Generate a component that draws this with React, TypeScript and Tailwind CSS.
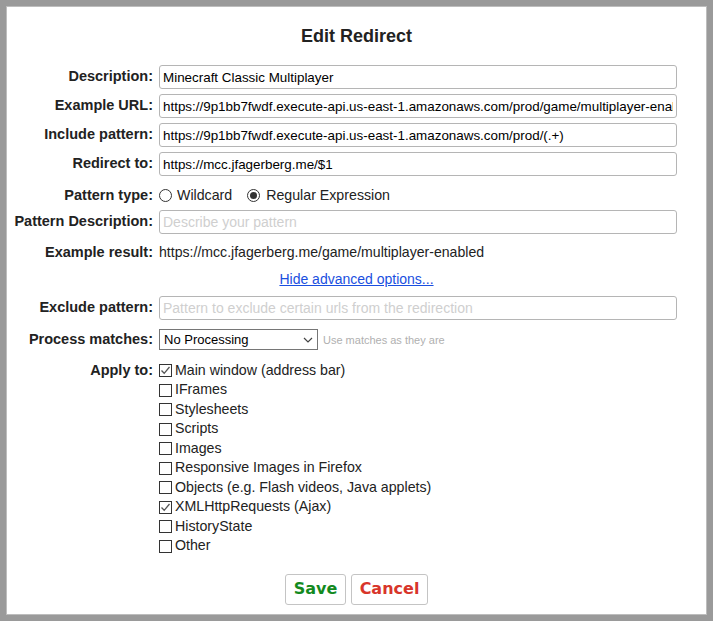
import React from 'react';

const labelCls = "w-[146px] shrink-0 text-right font-bold text-[14.5px] text-[#222]";
const inputCls = "w-[518px] h-[24px] border border-[#b5b5b5] rounded-[3px] px-[3px] text-[13.4px] text-black placeholder:text-[14px] placeholder:text-[#cfcfcf] outline-none bg-white";

const Row: React.FC<{ label: string; className?: string; children: React.ReactNode }> = ({ label, className, children }) => (
  <div className={`flex items-center gap-[6px] ${className || ''}`}>
    <div className={labelCls}>{label}</div>
    {children}
  </div>
);

const Radio: React.FC<{ checked?: boolean }> = ({ checked }) => (
  <span className="w-[13px] h-[13px] rounded-full border border-[#333] flex items-center justify-center bg-white shrink-0">
    {checked && <span className="w-[7px] h-[7px] rounded-full bg-[#333]" />}
  </span>
);

const Check: React.FC<{ label: string; checked?: boolean }> = ({ label, checked }) => (
  <div className="flex items-center h-[19.5px]">
    <span className="w-[13px] h-[13px] border border-[#333] bg-white shrink-0 flex items-center justify-center">
      {checked && (
        <svg width="11" height="11" viewBox="0 0 11 11">
          <polyline points="1.5,5.5 4.2,8.3 9.5,2" fill="none" stroke="#555" strokeWidth="1.3" />
        </svg>
      )}
    </span>
    <span className="ml-[3px] text-[14.2px] text-[#222]">{label}</span>
  </div>
);

const applyTo = [
  { label: 'Main window (address bar)', checked: true },
  { label: 'IFrames' },
  { label: 'Stylesheets' },
  { label: 'Scripts' },
  { label: 'Images' },
  { label: 'Responsive Images in Firefox' },
  { label: 'Objects (e.g. Flash videos, Java applets)' },
  { label: 'XMLHttpRequests (Ajax)', checked: true },
  { label: 'HistoryState' },
  { label: 'Other' },
];

const App: React.FC = () => {
  return (
    <div className="w-[713px] h-[621px] bg-[#9a9a9a] p-[6px] overflow-hidden" style={{ fontFamily: '"Liberation Sans", Arial, sans-serif' }}>
      <div className="w-[701px] h-[609px] bg-white border border-[#bdbdbd] flex flex-col pt-[18px]">
        <h1 className="h-[22px] leading-[22px] text-center font-bold text-[18px] text-[#222] mb-[18px]">Edit Redirect</h1>

        <Row label="Description:" className="mb-[5px]">
          <input className={inputCls} defaultValue="Minecraft Classic Multiplayer" />
        </Row>
        <Row label="Example URL:" className="mb-[5px]">
          <input className={inputCls} defaultValue="https://9p1bb7fwdf.execute-api.us-east-1.amazonaws.com/prod/game/multiplayer-enabled" />
        </Row>
        <Row label="Include pattern:" className="mb-[5px]">
          <input className={inputCls} defaultValue="https://9p1bb7fwdf.execute-api.us-east-1.amazonaws.com/prod/(.+)" />
        </Row>
        <Row label="Redirect to:" className="mb-[5px]">
          <input className={inputCls} defaultValue="https://mcc.jfagerberg.me/$1" />
        </Row>

        <Row label="Pattern type:" className="h-[29px]">
          <div className="flex items-center text-[14.2px] text-[#222]">
            <Radio />
            <span className="ml-[5px]">Wildcard</span>
            <span className="ml-[15px]"><Radio checked /></span>
            <span className="ml-[6px]">Regular Expression</span>
          </div>
        </Row>

        <Row label="Pattern Description:" className="mb-[5px]">
          <input className={inputCls} placeholder="Describe your pattern" />
        </Row>

        <Row label="Example result:" className="h-[28px]">
          <span className="text-[14.1px] text-[#222]">https://mcc.jfagerberg.me/game/multiplayer-enabled</span>
        </Row>

        <div className="h-[24px] flex items-center justify-center mb-[5px]">
          <a href="#" className="text-[14px] text-[#1a4fe0] underline">Hide advanced options...</a>
        </div>

        <Row label="Exclude pattern:" className="mb-[9px]">
          <input className={inputCls} placeholder="Pattern to exclude certain urls from the redirection" />
        </Row>

        <Row label="Process matches:" className="mb-[10px]">
          <div className="flex items-center">
            <div className="w-[159px] h-[21px] border border-[#767676] bg-white flex items-center justify-between pl-[4px] pr-[4px] text-[13px] text-black">
              <span>No Processing</span>
              <svg width="10" height="6" viewBox="0 0 10 6">
                <polyline points="1,1 5,5 9,1" fill="none" stroke="#444" strokeWidth="1.2" />
              </svg>
            </div>
            <span className="ml-[5px] text-[11px] text-[#b0b0b0]">Use matches as they are</span>
          </div>
        </Row>

        <div className="flex items-start gap-[6px]">
          <div className={`${labelCls} h-[19.5px] leading-[19.5px]`}>Apply to:</div>
          <div className="flex flex-col">
            {applyTo.map(a => <Check key={a.label} label={a.label} checked={a.checked} />)}
          </div>
        </div>

        <div className="flex justify-center gap-[5px] mt-[18px]">
          <button className="w-[61px] h-[31px] border border-[#c4c4c4] rounded-[3px] bg-white text-[16px] font-bold text-[#138a1e]" style={{ fontFamily: '"DejaVu Sans", Verdana, sans-serif' }}>Save</button>
          <button className="w-[77px] h-[31px] border border-[#c4c4c4] rounded-[3px] bg-white text-[16px] font-bold text-[#d8352a]" style={{ fontFamily: '"DejaVu Sans", Verdana, sans-serif' }}>Cancel</button>
        </div>
      </div>
    </div>
  );
};

export default App;
